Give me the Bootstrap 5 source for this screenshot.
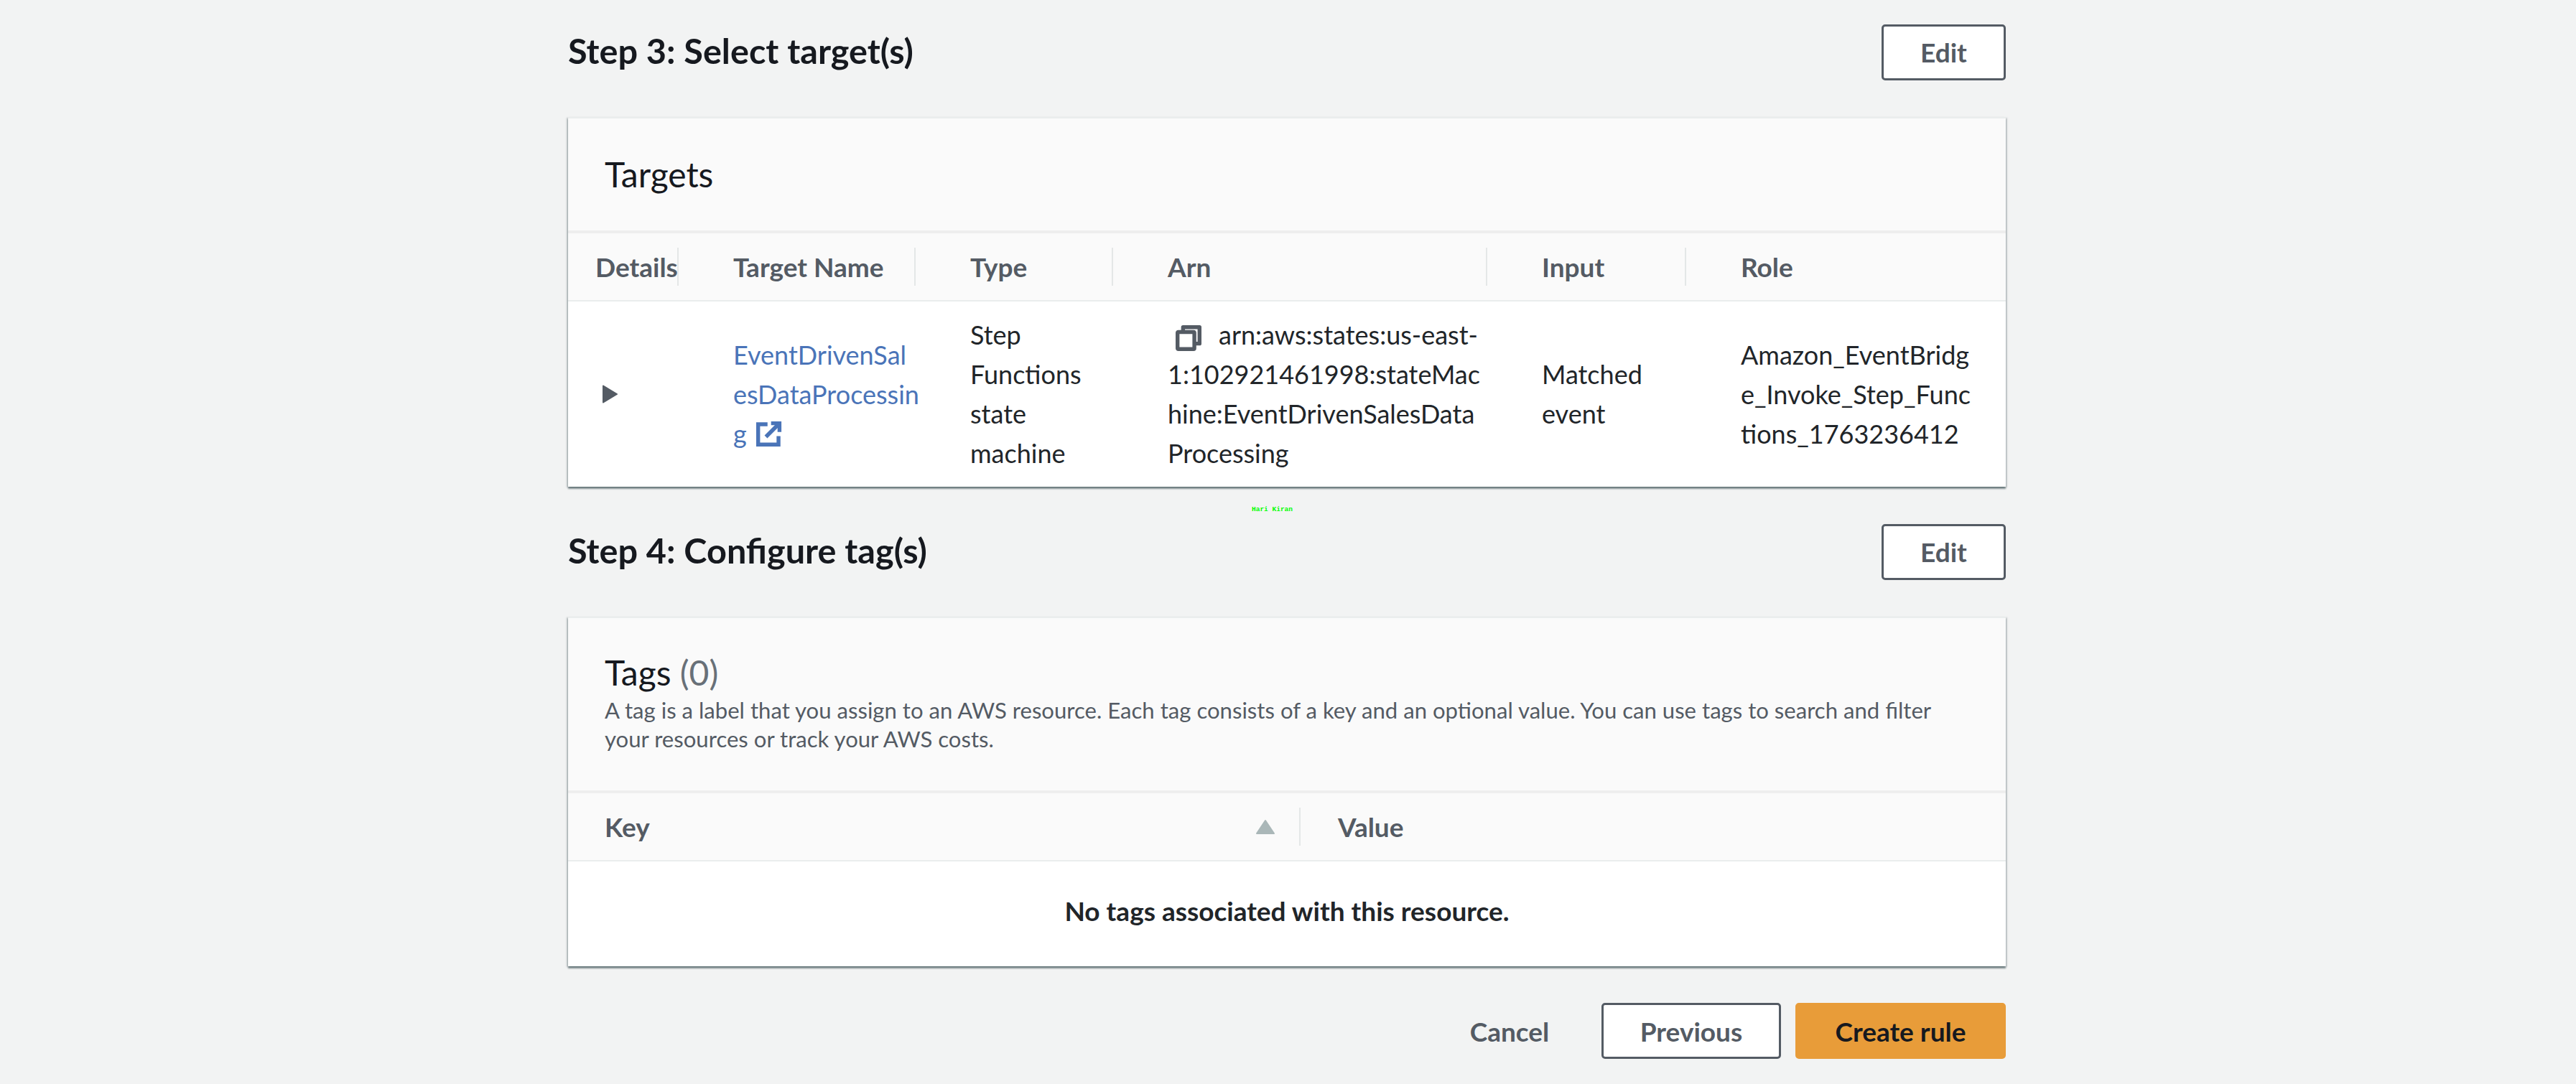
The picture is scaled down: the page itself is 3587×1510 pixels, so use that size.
<!DOCTYPE html>
<html lang="en">
<head>
  <title>Review and create rule</title>
  <meta charset="UTF-8" />
  <meta name="viewport" content="width=device-width, initial-scale=1.0" />
  <link href="https://cdn.jsdelivr.net/npm/bootstrap@5.3.0/dist/css/bootstrap.min.css" rel="stylesheet">
  <style>
    body {
      background-color: #f2f3f3;
      color: #16191f;
      font-family: Lato, "Open Sans", sans-serif;
      font-size: 36px;
      line-height: 55px;
    }

    .page-wrap {
      width: 2002px;
      margin-left: 791px;
      position: relative;
    }

    .step-head {
      height: 79px;
      margin-bottom: 51px;
    }

    .step-head.first {
      margin-top: 33px;
    }

    .step-title {
      font-size: 48.6px;
      font-weight: 700;
      line-height: 55px;
      margin: 0 0 4px;
    }

    .aws-btn {
      font-size: 37px;
      font-weight: 700;
      line-height: 1;
      border-radius: 5px;
      height: 78px;
      padding: 0;
      border: 3px solid #545b64;
      color: #545b64;
      background-color: #fff;
    }

    .aws-btn:hover {
      color: #16191f;
      background-color: #fafafa;
      border-color: #16191f;
    }

    .btn-edit { width: 173px; }
    .btn-prev { width: 250px; }

    .btn-create {
      width: 293px;
      background-color: #e89c39;
      border-color: #e89c39;
      color: #16191f;
    }

    .btn-cancel {
      width: 216px;
      border-color: transparent;
      background-color: transparent;
    }

    .footer-actions {
      gap: 20px;
    }

    .panel {
      border: 0;
      border-top: 2px solid #eaeded;
      border-radius: 0;
      background-color: #fff;
      box-shadow: 0 3px 2px 0 rgba(0, 28, 36, .45), 2px 1px 2px 0 rgba(0, 28, 36, .15), -2px 1px 2px 0 rgba(0, 28, 36, .2);
      margin-bottom: 51px;
    }

    .panel-top {
      background-color: #fafafa;
      border-bottom: 4px solid #eeeeee;
      padding: 0 51px;
    }

    .panel-top.targets {
      height: 160px;
      display: flex;
      align-items: center;
    }

    .panel-top.tags {
      height: 244px;
      padding-top: 44px;
    }

    .panel-title {
      font-size: 48px;
      line-height: 64px;
      font-weight: 400;
      margin: 0;
    }

    .panel-title span { color: #687078; }

    .panel-desc {
      font-size: 31.1px;
      line-height: 40px;
      color: #545b64;
      margin: 0;
    }

    .data-table {
      table-layout: fixed;
      width: 100%;
      margin: 0;
    }

    .data-table th {
      position: relative;
      height: 94px;
      padding: 0 0 0 76px;
      background-color: #fafafa;
      color: #545b64;
      font-size: 37px;
      font-weight: 700;
      vertical-align: middle;
      border-bottom: 2px solid #eaeded;
      white-space: nowrap;
    }

    .data-table th:first-child { padding-left: 38px; }

    .data-table th:not(:last-child)::after {
      content: "";
      position: absolute;
      right: 0;
      top: 20px;
      bottom: 20px;
      width: 2px;
      background-color: #e4e7e7;
    }

    .data-table td {
      height: 259px;
      padding: 0 0 0 76px;
      vertical-align: middle;
      border: 0;
      white-space: nowrap;
    }

    .data-table td:first-child { padding-left: 48px; }

    .tag-table th:first-child { padding-left: 51px; }
    .tag-table th { padding-left: 52px; }

    .data-table.tag-table td {
      height: 147px;
      padding: 0 0 10px;
      font-size: 37px;
      font-weight: 700;
      text-align: center;
    }

    .sort-up {
      position: absolute;
      right: 35px;
      top: 36px;
    }

    .target-link {
      color: #4a74b8;
      text-decoration: none;
    }

    .ext-icon {
      margin-left: 4px;
      margin-bottom: 4px;
    }

    .copy-icon {
      margin-left: 11px;
      margin-right: 24px;
    }

    .watermark {
      position: absolute;
      left: 952px;
      top: 672px;
      font-family: "Liberation Mono", monospace;
      font-size: 9.5px;
      font-weight: 700;
      line-height: 10px;
      color: #00ff00;
    }
  </style>
</head>
<body>

  <div class="page-wrap">
    <div class="watermark">Hari Kiran</div>

    <div class="step-head first d-flex justify-content-between align-items-center">
      <h2 class="step-title">Step 3: Select target(s)</h2>
      <button type="button" class="btn aws-btn btn-edit">Edit</button>
    </div>

    <div class="card panel">
      <div class="panel-top targets">
        <h3 class="panel-title">Targets</h3>
      </div>
      <table class="table data-table">
        <thead>
          <tr>
            <th style="width:154px">Details</th>
            <th style="width:330px">Target Name</th>
            <th style="width:275px">Type</th>
            <th style="width:521px">Arn</th>
            <th style="width:277px">Input</th>
            <th>Role</th>
          </tr>
        </thead>
        <tbody>
          <tr>
            <td>
              <svg width="21" height="26" viewBox="0 0 21 26" class="d-block"><path d="M1 1.5 L20 13 L1 24.5 Z" fill="#545b64" stroke="#545b64" stroke-width="2" stroke-linejoin="round"/></svg>
            </td>
            <td>
              <a href="#" class="target-link">EventDrivenSal<br>esDataProcessin<br>g <svg width="36" height="36" viewBox="0 0 16 16" fill="none" stroke="#4a74b8" stroke-width="2.4" class="ext-icon align-text-bottom"><path d="M7 2.2H1.2V14.8H13.8V9.5"/><path d="M9.2 1.6h5.2V7"/><path d="M14 2 L6 10"/></svg></a>
            </td>
            <td>Step<br>Functions<br>state<br>machine</td>
            <td>
              <svg width="36" height="36" viewBox="0 0 16 16" fill="none" stroke="#545b64" stroke-width="2.4" stroke-linejoin="round" class="copy-icon"><rect x="1.2" y="4.2" width="10.4" height="10.6" rx=".5"/><path d="M4.6 3.5V1.2h10.2v10.2H12.2"/></svg>arn:aws:states:us-east-<br>1:102921461998:stateMac<br>hine:EventDrivenSalesData<br>Processing
            </td>
            <td>Matched<br>event</td>
            <td>Amazon_EventBridg<br>e_Invoke_Step_Func<br>tions_1763236412</td>
          </tr>
        </tbody>
      </table>
    </div>

    <div class="step-head d-flex justify-content-between align-items-center">
      <h2 class="step-title">Step 4: Configure tag(s)</h2>
      <button type="button" class="btn aws-btn btn-edit">Edit</button>
    </div>

    <div class="card panel">
      <div class="panel-top tags">
        <h3 class="panel-title">Tags <span>(0)</span></h3>
        <p class="panel-desc">A tag is a label that you assign to an AWS resource. Each tag consists of a key and an optional value. You can use tags to search and filter<br>your resources or track your AWS costs.</p>
      </div>
      <table class="table data-table tag-table">
        <thead>
          <tr>
            <th style="width:1020px">Key
              <svg width="28" height="22" viewBox="0 0 28 22" class="sort-up"><path d="M14 2 L26 20 H2 Z" fill="#aab7b8" stroke="#aab7b8" stroke-width="2" stroke-linejoin="round"/></svg>
            </th>
            <th>Value</th>
          </tr>
        </thead>
        <tbody>
          <tr>
            <td colspan="2">No tags associated with this resource.</td>
          </tr>
        </tbody>
      </table>
    </div>

    <div class="footer-actions d-flex justify-content-end align-items-center">
      <button type="button" class="btn aws-btn btn-cancel">Cancel</button>
      <button type="button" class="btn aws-btn btn-prev">Previous</button>
      <button type="button" class="btn aws-btn btn-create">Create rule</button>
    </div>
  </div>

  <script src="https://cdn.jsdelivr.net/npm/bootstrap@5.3.0/dist/js/bootstrap.bundle.min.js"></script>
</body>
</html>
